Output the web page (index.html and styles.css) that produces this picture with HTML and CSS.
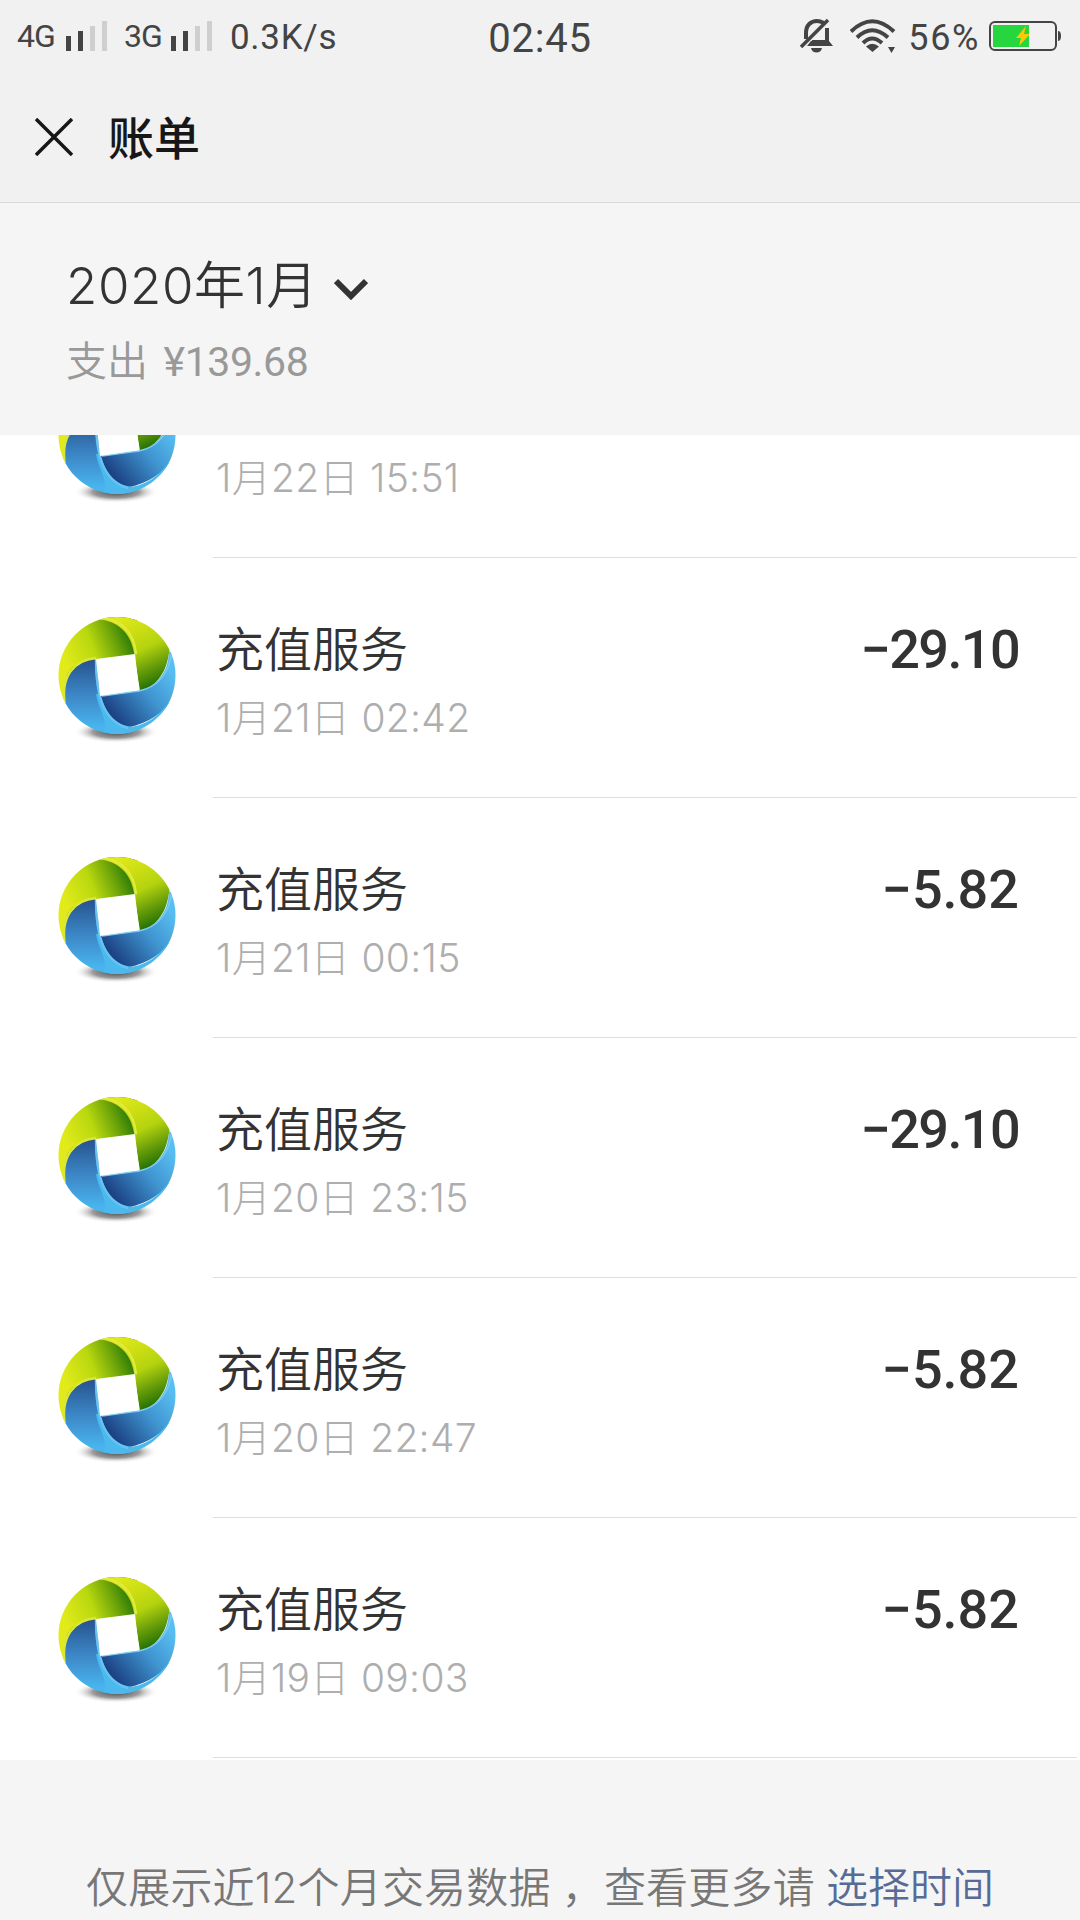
FILE: index.html
```
<!DOCTYPE html>
<html lang="zh-CN">

<head>
    <meta charset="UTF-8">
    <meta name="viewport" content="width=device-width, initial-scale=1.0">
    <title>账单</title>
    <link rel="stylesheet" href="styles.css">
</head>

<body>
    <!-- shared logo, used by every row -->
    <svg class="defs" width="0" height="0">
        <defs>
            <linearGradient id="green" gradientUnits="userSpaceOnUse" x1="8" y1="48" x2="72" y2="22">
                <stop offset="0" stop-color="#e2ea1c" />
                <stop offset="0.45" stop-color="#b9d80e" />
                <stop offset="0.75" stop-color="#72a80a" />
                <stop offset="1" stop-color="#2f7d06" />
            </linearGradient>
            <linearGradient id="lime" gradientUnits="userSpaceOnUse" x1="65" y1="2" x2="96" y2="68">
                <stop offset="0" stop-color="#dfe818" />
                <stop offset="0.5" stop-color="#b4d30e" />
                <stop offset="0.75" stop-color="#6ea20a" />
                <stop offset="1" stop-color="#2a7404" />
            </linearGradient>
            <linearGradient id="navy" gradientUnits="userSpaceOnUse" x1="34" y1="44" x2="34" y2="112">
                <stop offset="0" stop-color="#265390" />
                <stop offset="0.5" stop-color="#3c85c4" />
                <stop offset="1" stop-color="#48b6ee" />
            </linearGradient>
            <linearGradient id="sky" gradientUnits="userSpaceOnUse" x1="112" y1="55" x2="56" y2="100">
                <stop offset="0" stop-color="#58bdf0" />
                <stop offset="0.45" stop-color="#3f93cf" />
                <stop offset="1" stop-color="#1c4384" />
            </linearGradient>
            <radialGradient id="shade">
                <stop offset="0" stop-color="#444" />
                <stop offset="0.55" stop-color="#777" stop-opacity="0.75" />
                <stop offset="1" stop-color="#fff" stop-opacity="0" />
            </radialGradient>
            <clipPath id="ball">
                <circle cx="59" cy="59.500" r="58.500" />
            </clipPath>
            <symbol id="logo" viewBox="0 0 120 130">
                <ellipse cx="58" cy="116" rx="42" ry="11" fill="url(#shade)" />
                <g clip-path="url(#ball)">
                    <path d="M0 0H80V44L38 43Q8 50 7 90H0Z" fill="url(#green)" />
                    <path d="M40 3C60 5 73 17 76 37L82 75C95 72 108 60 111 37L120 0H42Z" fill="url(#lime)" />
                    <path d="M42 2C64 3 76 17 78 38" fill="none" stroke="#e3ea3c" stroke-width="2.500" />
                    <path d="M37 43C18 45 7 54 7 70V120H75L44 80Z" fill="url(#navy)" />
                    <path d="M111 36C110 58 98 70 81 75L43 80C47 95 54 106 70 111C92 108 108 94 120 78V30Z" fill="url(#sky)" />
                    <path d="M42 78C46 97 54 108 74 111C91 108 107 96 117 76V120H40C56 112 40 94 38 78Z" fill="#4bb9ee" />
                    <path d="M38 44C38 74 43 105 70 112" fill="none" stroke="#67c3f1" stroke-width="2.500" />
                    <path d="M114 34C112 57 100 71 81 75L44 80" fill="none" stroke="#7ccbf2" stroke-width="1.500" />
                    <path d="M7 90C2 60 16 44 38 42" fill="none" stroke="#dbe733" stroke-width="2.500" />
                </g>
                <path d="M38 43L77 38L81 74L42 80Z" fill="#fff" />
            </symbol>
        </defs>
    </svg>

    <div class="status-bar">
        <div class="status-left">
            <span class="net">4G</span>
            <svg class="signal" width="42" height="30" viewBox="0 0 42 30">
                <path d="M0 15h5v15H0zM12 10h5v20h-5z" fill="#444" />
                <path d="M24 5h5v25h-5zM36 0h5v30h-5z" fill="#cfcfcf" />
            </svg>
            <span class="net net-2">3G</span>
            <svg class="signal" width="42" height="30" viewBox="0 0 42 30">
                <path d="M0 15h5v15H0zM12 10h5v20h-5z" fill="#444" />
                <path d="M24 5h5v25h-5zM36 0h5v30h-5z" fill="#cfcfcf" />
            </svg>
            <span class="speed">0.3K/s</span>
        </div>
        <div class="clock">02:45</div>
        <div class="status-right">
            <svg class="bell" width="34" height="36" viewBox="0 0 34 36">
                <path d="M6 21V15C6 7 11 3 17 3C20 3 22 4 24 5M27 10V24H12" fill="none" stroke="#444" stroke-width="4" />
                <path d="M7 28L11 23H29L33 28ZM11 30H22C21 36 12 36 11 30Z" fill="#444" />
                <path d="M1 29L28 2" stroke="#444" stroke-width="3.500" />
            </svg>
            <svg class="wifi" width="46" height="34" viewBox="0 0 46 34">
                <path d="M1 12.500Q22 -8 44 12.500M7 18.500Q22 4 38 18.500M13 24Q22 15 32 24" fill="none" stroke="#444" stroke-width="4" />
                <path d="M16 27.500Q22 22 29 27.500L22.500 33ZM38 28H45L41.500 34Z" fill="#444" />
            </svg>
            <span class="percent">56%</span>
            <svg class="battery" width="72" height="32" viewBox="0 0 72 32">
                <rect x="1" y="2" width="66" height="28" rx="5" fill="none" stroke="#444" stroke-width="2" />
                <path d="M4 5H40V27H4Z" fill="#27d53f" />
                <path d="M69 11Q72 11 72 16Q72 21 69 21Z" fill="#444" />
                <path d="M37 6L27 18H32L30 26L41 14H35Z" fill="#ffc800" />
            </svg>
        </div>
    </div>

    <div class="title-bar">
        <svg class="close" width="38" height="38" viewBox="0 0 38 38">
            <path d="M1 1L37 37M37 1L1 37" stroke="#171717" stroke-width="3.500" />
        </svg>
        <h1>账单</h1>
    </div>

    <div class="summary">
        <div class="month">
            <span class="month-text">2020年1月</span>
            <svg width="34" height="22" viewBox="0 0 34 22">
                <path d="M2 3L17 18L32 3" fill="none" stroke="#333" stroke-width="6" />
            </svg>
        </div>
        <div class="total">支出 <span>¥139.68</span></div>
    </div>

    <div class="list">
        <!-- half scrolled under the summary, only the date is left -->
        <div class="row">
            <svg class="logo"><use href="#logo" /></svg>
            <div class="info">
                <div class="name"></div>
                <div class="date">1月22日 15:51</div>
            </div>
        </div>
        <div class="row">
            <svg class="logo"><use href="#logo" /></svg>
            <div class="info">
                <div class="name">充值服务<span class="amount long">−29.10</span></div>
                <div class="date">1月21日 02:42</div>
            </div>
        </div>
        <div class="row">
            <svg class="logo"><use href="#logo" /></svg>
            <div class="info">
                <div class="name">充值服务<span class="amount">−5.82</span></div>
                <div class="date">1月21日 00:15</div>
            </div>
        </div>
        <div class="row">
            <svg class="logo"><use href="#logo" /></svg>
            <div class="info">
                <div class="name">充值服务<span class="amount long">−29.10</span></div>
                <div class="date">1月20日 23:15</div>
            </div>
        </div>
        <div class="row">
            <svg class="logo"><use href="#logo" /></svg>
            <div class="info">
                <div class="name">充值服务<span class="amount">−5.82</span></div>
                <div class="date">1月20日 22:47</div>
            </div>
        </div>
        <div class="row">
            <svg class="logo"><use href="#logo" /></svg>
            <div class="info">
                <div class="name">充值服务<span class="amount">−5.82</span></div>
                <div class="date">1月19日 09:03</div>
            </div>
        </div>
    </div>

    <div class="footer">
        <span class="tip">仅展示近12个月交易数据<span class="comma">，</span>查看更多请</span>
        <a class="pick">选择时间</a>
    </div>
</body>

</html>
```

FILE: styles.css
```
* {
    box-sizing: border-box;
}

body {
    margin: 0;
    height: 1920px;
    overflow: hidden;
    display: flex;
    flex-direction: column;
    background: #f5f5f5;
    color: #333;
    font-family: Inter, "Noto Sans CJK SC", sans-serif;
    font-weight: 350;
    white-space: nowrap;
}

svg {
    display: block;
    flex: none;
}

.defs {
    position: absolute;
}

/* status bar */
.status-bar {
    height: 72px;
    flex: none;
    display: grid;
    grid-template-columns: 1fr auto 1fr;
    background: #f1f1f1;
    color: #444;
    font-family: Roboto, sans-serif;
    font-weight: 400;
}

.status-left,
.status-right {
    display: flex;
    align-items: center;
    height: 72px;
}

.status-left {
    padding-left: 17px;
}

.status-right {
    justify-content: flex-end;
    padding-right: 19px;
}

.net {
    width: 49px;
    font-size: 32px;
    letter-spacing: -1px;
}

.net-2 {
    width: 47px;
    margin-left: 16px;
}

.speed {
    margin: 3px 0 0 17px;
    font-size: 35px;
    letter-spacing: 0.7px;
}

.clock {
    font-size: 40px;
    letter-spacing: 0.8px;
    line-height: 77px;
}

.wifi {
    margin-left: 16px;
}

.percent {
    margin: 4px 9px 0 12px;
    font-size: 36px;
    letter-spacing: 1.6px;
}

/* title */
.title-bar {
    height: 131px;
    flex: none;
    display: flex;
    align-items: center;
    padding: 0 0 0 35px;
    background: #f1f1f1;
    border-bottom: 1px solid #d9d9d9;
}

h1 {
    margin: -4px 0 0 35px;
    font-size: 46px;
    font-weight: 500;
    color: #171717;
}

/* month and total */
.summary {
    height: 232px;
    flex: none;
    padding: 50px 0 0 66px;
}

.month {
    display: flex;
    align-items: center;
    width: 302px;
    height: 64px;
    font-size: 51px;
    justify-content: space-between;
}

.month-text {
    margin-top: -7px;
    letter-spacing: 0.6px;
}

.month svg {
    margin-top: 8px;
}

.total {
    height: 64px;
    margin-top: 12px;
    line-height: 64px;
    font-size: 41px;
    color: #999;
}

.total span {
    margin-left: 4px;
    font-family: Roboto, sans-serif;
    font-weight: 400;
    letter-spacing: -0.4px;
}

/* bills */
.list {
    height: 1325px;
    flex: none;
    display: flex;
    flex-direction: column;
    justify-content: flex-end;
    padding-bottom: 2px;
    overflow: hidden;
    background: #fff;
}

.row {
    height: 240px;
    flex: none;
    display: flex;
    padding-right: 3px;
}

.logo {
    width: 120px;
    height: 130px;
    margin: 58px 35px 0 58px;
}

.info {
    flex: 1;
    padding: 60px 58px 0 3px;
    border-bottom: 1px solid #dedede;
}

.name {
    display: flex;
    justify-content: space-between;
    height: 64px;
    line-height: 64px;
    font-size: 48px;
}

.amount {
    font-family: Roboto, sans-serif;
    font-size: 54px;
    font-weight: 500;
}

.long {
    letter-spacing: -1.6px;
}

.date {
    height: 60px;
    margin-top: 6px;
    line-height: 60px;
    font-size: 39px;
    font-weight: 300;
    letter-spacing: 0.3px;
    color: #aeaeae;
}

.footer {
    flex: 1;
    display: flex;
    padding: 96px 0 0 86px;
    font-size: 42px;
    line-height: 64px;
    color: #777;
}

.tip {
    letter-spacing: 0.2px;
}

.comma {
    margin-left: 11px;
}

.pick {
    margin-left: 11px;
    color: #576b95;
}
```
